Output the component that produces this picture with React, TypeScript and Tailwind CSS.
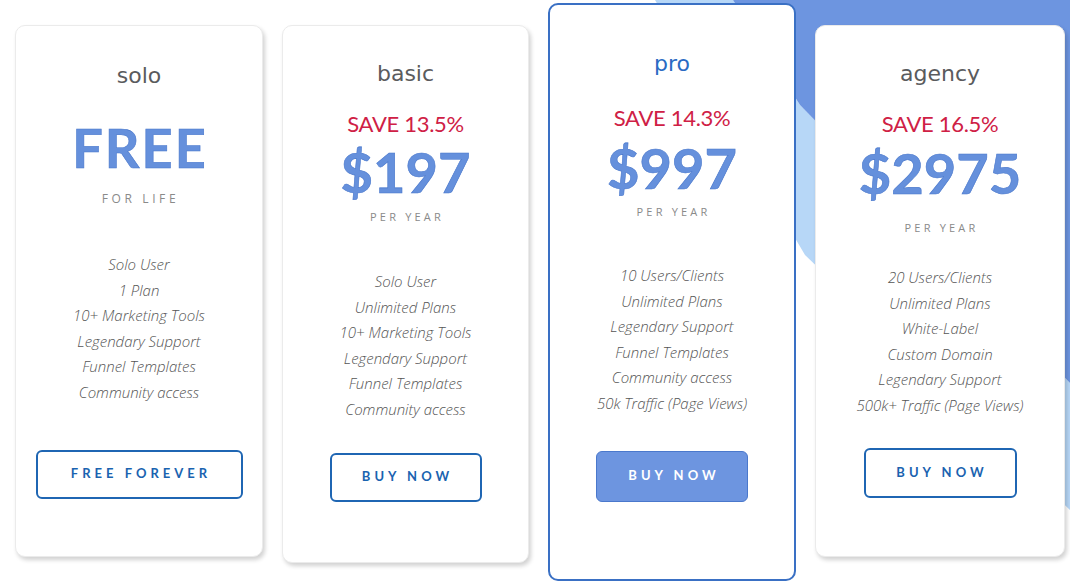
import React from "react";

type Plan = {
  card: string;
  title: string;
  titleCls: string;
  save?: string;
  saveCls?: string;
  price: string;
  priceCls: string;
  per: string;
  perCls: string;
  features: string[];
  featCls: string;
  button: string;
  btnCls: string;
};

const titleBase = "font-['DejaVu_Sans',sans-serif] text-[22px] leading-[28px]";
const saveBase = "font-['Lato',sans-serif] text-[22px] leading-[28px] text-[#cf2045] tracking-[-0.3px]";
const priceBase =
  "font-['Lato',sans-serif] font-bold leading-[60px] text-[#6590dc] [-webkit-text-stroke:0.6px_#4a78cc]";
const perBase = "font-['Open_Sans',sans-serif] text-[11px] leading-[16px] tracking-[3.2px] pl-[3px] text-[#8a8a8a]";
const featBase =
  "font-['Open_Sans',sans-serif] font-light italic text-[15px] leading-[25.6px] text-[#555] text-center";
const btnBase =
  "flex items-center justify-center rounded-[6px] font-['Lato',sans-serif] font-bold text-[13px] tracking-[4px] pl-[4px]";
const cardBase = "flex flex-col items-center bg-white rounded-[10px] shrink-0";
const shadowCard = "border border-[#ebebeb] shadow-[2px_3px_4px_rgba(0,0,0,0.18)]";

const plans: Plan[] = [
  {
    card: `${cardBase} ${shadowCard} w-[248px] h-[532px] mt-[25px]`,
    title: "solo",
    titleCls: `${titleBase} mt-[36px] text-[#5a5b5d]`,
    price: "FREE",
    priceCls: `${priceBase} text-[54px] tracking-[2px] pl-[2px] mt-[28px]`,
    per: "FOR LIFE",
    perCls: `${perBase} mt-[13px] text-[12px] tracking-[3.6px]`,
    features: [
      "Solo User",
      "1 Plan",
      "10+ Marketing Tools",
      "Legendary Support",
      "Funnel Templates",
      "Community access",
    ],
    featCls: `${featBase} mt-[45px]`,
    button: "FREE FOREVER",
    btnCls: `${btnBase} mt-[44px] w-[207px] h-[49px] border-2 border-[#1f66b3] text-[#1a63b0]`,
  },
  {
    card: `${cardBase} ${shadowCard} w-[247px] h-[538px] mt-[25px]`,
    title: "basic",
    titleCls: `${titleBase} mt-[34px] text-[#5a5b5d]`,
    save: "SAVE 13.5%",
    saveCls: `${saveBase} mt-[22px]`,
    price: "$197",
    priceCls: `${priceBase} text-[56px] mt-[4px]`,
    per: "PER YEAR",
    perCls: `${perBase} mt-[7px]`,
    features: [
      "Solo User",
      "Unlimited Plans",
      "10+ Marketing Tools",
      "Legendary Support",
      "Funnel Templates",
      "Community access",
    ],
    featCls: `${featBase} mt-[44px]`,
    button: "BUY NOW",
    btnCls: `${btnBase} mt-[30px] w-[152px] h-[49px] border-2 border-[#1f66b3] text-[#1a63b0]`,
  },
  {
    card: `${cardBase} border-2 border-[#3a70c4] w-[248px] h-[578px] mt-[3px]`,
    title: "pro",
    titleCls: `${titleBase} mt-[45px] text-[#2a6bc3]`,
    save: "SAVE 14.3%",
    saveCls: `${saveBase} mt-[26px]`,
    price: "$997",
    priceCls: `${priceBase} text-[56px] mt-[6px]`,
    per: "PER YEAR",
    perCls: `${perBase} mt-[6px]`,
    features: [
      "10 Users/Clients",
      "Unlimited Plans",
      "Legendary Support",
      "Funnel Templates",
      "Community access",
      "50k Traffic (Page Views)",
    ],
    featCls: `${featBase} mt-[43px]`,
    button: "BUY NOW",
    btnCls: `${btnBase} mt-[34px] w-[152px] h-[51px] bg-[#6d95e0] border border-[#4a78cc] text-white`,
  },
  {
    card: `${cardBase} ${shadowCard} w-[250px] h-[532px] mt-[25px]`,
    title: "agency",
    titleCls: `${titleBase} mt-[34px] text-[#5a5b5d]`,
    save: "SAVE 16.5%",
    saveCls: `${saveBase} mt-[22px]`,
    price: "$2975",
    priceCls: `${priceBase} text-[56px] mt-[5px]`,
    per: "PER YEAR",
    perCls: `${perBase} mt-[17px]`,
    features: [
      "20 Users/Clients",
      "Unlimited Plans",
      "White-Label",
      "Custom Domain",
      "Legendary Support",
      "500k+ Traffic (Page Views)",
    ],
    featCls: `${featBase} mt-[29px]`,
    button: "BUY NOW",
    btnCls: `${btnBase} mt-[29px] w-[153px] h-[50px] border-2 border-[#1f66b3] text-[#1a63b0]`,
  },
];

function Card({ p }: { p: Plan }) {
  return (
    <div className={p.card}>
      <div className={p.titleCls}>{p.title}</div>
      {p.save && <div className={p.saveCls}>{p.save}</div>}
      <div className={p.priceCls}>{p.price}</div>
      <div className={p.perCls}>{p.per}</div>
      <div className={p.featCls}>
        {p.features.map((f) => (
          <div key={f}>{f}</div>
        ))}
      </div>
      <div className={p.btnCls}>{p.button}</div>
    </div>
  );
}

export default function App() {
  return (
    <div className="relative w-[1070px] h-[584px] overflow-hidden bg-white">
      <svg
        className="absolute inset-0"
        width="1070"
        height="584"
        viewBox="0 0 1070 584"
      >
        <polygon points="655,0 733,0 800,105 1070,383 1070,510 805,255" fill="#b7d7f7" />
        <polygon points="733,0 1070,0 1070,383 800,105" fill="#6d95e0" />
      </svg>
      <div className="relative flex items-start gap-[19px] pl-[15px]">
        {plans.map((p) => (
          <Card key={p.title} p={p} />
        ))}
      </div>
    </div>
  );
}
